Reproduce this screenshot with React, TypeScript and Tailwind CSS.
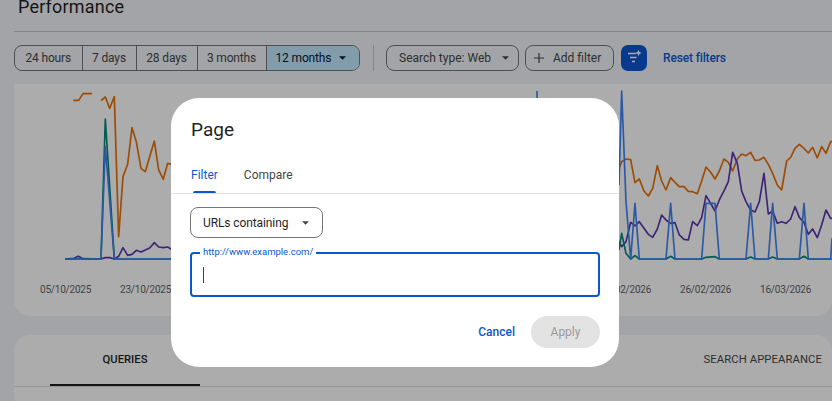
const leftOrange1 = '220,46 236,46 249,26 276,26';
const leftOrange2 = '303,47 316,36 329,70 343,35 356,455 369,275 383,238 396,128 409,170 423,250 436,260 449,215 463,168 476,255 490,283 503,235 516,238';
const leftGreen = '195,522 303,522 316,102 343,522 516,522';
const leftBlue = '195,522 303,522 316,185 343,522 516,522';
const leftPurple = '195,522 222,520 235,514 249,521 303,522 316,518 329,518 343,522 356,514 369,488 383,511 396,508 409,496 423,501 436,495 449,489 463,473 476,486 490,488 503,486 516,494';

const rightOrange = '12,250 20,230 33,222 47,224 60,293 73,282 87,318 100,333 113,310 127,242 140,288 153,315 167,278 180,292 193,305 207,305 220,319 233,320 247,326 260,288 273,246 287,262 300,282 313,258 327,222 340,232 353,258 367,222 380,207 393,212 407,202 420,226 433,225 447,217 460,238 473,265 487,300 500,315 515,228 527,217 540,190 553,178 567,190 580,204 593,187 607,219 620,185 633,205 647,170 651,170';
const rightPurple = '12,470 20,485 33,470 47,412 60,423 73,410 87,430 100,448 113,457 127,432 140,390 153,405 167,415 180,413 193,450 207,463 220,465 233,410 247,422 260,398 273,332 287,355 300,378 313,345 327,318 340,290 353,202 367,235 380,318 393,350 407,375 420,381 433,350 447,265 460,387 473,378 487,415 500,410 513,415 527,402 540,365 553,397 567,412 580,448 593,432 607,458 620,420 633,375 647,400 651,400';
const rightGreen = '12,495 20,445 33,505 47,522 60,512 73,522 153,522 167,514 180,522 260,522 273,517 300,515 313,522 393,522 407,516 420,522 460,522 473,516 487,522 553,522 567,514 580,522 651,522';
const rightBlue = '12,300 20,18 33,350 47,522 60,355 73,522 153,522 167,355 180,522 260,522 273,355 300,355 313,522 393,522 407,355 420,522 460,522 473,355 487,522 553,522 567,355 580,522 647,522 651,460';

const dates = ['05/10/2025', '23/10/2025', '10/11/2025', '28/11/2025', '16/12/2025', '03/01/2026', '21/01/2026', '08/02/2026', '26/02/2026', '16/03/2026'];
const ranges = ['24 hours', '7 days', '28 days', '3 months'];
const rangeWidths = ['w-[67.5px]', 'w-[54px]', 'w-[61px]', 'w-[69px]'];

function Caret() {
  return (
    <svg width="7" height="4" viewBox="0 0 7 4" className="shrink-0">
      <path d="M0 .25h7L3.5 3.75z" fill="currentColor" />
    </svg>
  );
}

function Line({ points, color }: { points: string; color: string }) {
  return <polyline points={points} fill="none" stroke={color} strokeWidth="5" strokeLinejoin="round" />;
}

function Chart() {
  return (
    <svg viewBox="14 84 818 195" className="block w-[818px] h-[195px]">
      <g transform="translate(0 85) scale(0.3333)">
        <Line points={leftOrange1} color="#e8710a" />
        <Line points={leftOrange2} color="#e8710a" />
        <Line points={leftPurple} color="#5e35b1" />
        <Line points={leftGreen} color="#00897b" />
        <Line points={leftBlue} color="#4285f4" />
      </g>
      <polyline points="537,91 537,100" fill="none" stroke="#4285f4" strokeWidth="1.7" />
      <g transform="translate(615 85) scale(0.3333)">
        <Line points={rightOrange} color="#e8710a" />
        <Line points={rightPurple} color="#5e35b1" />
        <Line points={rightGreen} color="#00897b" />
        <Line points={rightBlue} color="#4285f4" />
      </g>
    </svg>
  );
}

export default function App() {
  return (
    <div className="relative w-[832px] h-[401px] overflow-hidden bg-[#f0f4f8] font-['Roboto',sans-serif] text-[#444746]">
      <div className="pl-[14px]">
        <div className="h-[32px] border-b border-[#c7c7c7]">
          <h1 className="pl-1 text-[18px] leading-[13px] tracking-[0.2px] text-[#1f1f1f]">Performance</h1>
        </div>

        <div className="flex items-center h-[52px] text-[12px]">
          <div className="flex h-[26px] w-[346px] rounded-lg border border-[#747775] overflow-hidden -tracking-[0.15px]">
            {ranges.map((r, i) => (
              <div key={r} className={`flex items-center justify-center border-r border-[#747775] ${rangeWidths[i]}`}>
                {r}
              </div>
            ))}
            <div className="flex flex-1 items-center gap-[8px] bg-[#c2e7ff] pl-[9px] text-[#001d35]">
              12 months
              <Caret />
            </div>
          </div>
          <div className="ml-[13px] mr-[12px] h-[26px] w-px bg-[#c7c7c7]" />
          <div className="flex h-[26px] w-[133px] items-center gap-[11px] rounded-lg border border-[#747775] pl-3">
            Search type: Web
            <Caret />
          </div>
          <div className="ml-[6px] flex h-[26px] w-[89px] items-center gap-[9px] rounded-lg border border-[#747775] pl-2">
            <svg width="10" height="10" viewBox="0 0 10 10">
              <path d="M5 0v10M0 5h10" stroke="currentColor" strokeWidth="1.2" fill="none" />
            </svg>
            Add filter
          </div>
          <div className="ml-[7px] h-[26px] w-[26px] rounded-[7px] bg-[#0b57d0] text-white">
            <svg width="26" height="26" viewBox="0 0 26 26" className="block">
              <path d="M7 8.5h8M9 12.5h6.5M11 16.5h3" stroke="currentColor" strokeWidth="1.3" fill="none" />
              <path d="M17.5 4.8l.9 2.3 2.3.9-2.3.9-.9 2.3-.9-2.3-2.3-.9 2.3-.9z" fill="currentColor" />
            </svg>
          </div>
          <span className="ml-[16px] font-medium -tracking-[0.15px] text-[#0b57d0]">Reset filters</span>
        </div>

        <div className="h-[232px] rounded-b-2xl bg-white">
          <Chart />
          <div className="flex pl-[26px] pt-[4px] text-[10px] leading-[14px] -tracking-[0.2px] text-[#5f6368]">
            {dates.map((d) => (
              <span key={d} className="w-[80px] shrink-0">{d}</span>
            ))}
          </div>
        </div>

        <div className="mt-[19px] h-[80px] rounded-t-2xl bg-white">
          <div className="flex h-[52px] items-end border-b border-[#dadce0] text-[11.25px] font-medium">
            <div className="ml-[36px] flex h-[52px] w-[150px] items-center justify-center border-b-2 border-[#1f1f1f] pt-[3px] text-[#1f1f1f]">
              QUERIES
            </div>
            <div className="ml-auto flex h-[52px] items-center pr-[10px] pt-[1px] font-normal tracking-[0.1px]">SEARCH APPEARANCE</div>
          </div>
        </div>
      </div>

      <div className="absolute inset-0 bg-black/[0.325]" />

      <div className="absolute left-[171px] top-[98px] h-[269px] w-[448px] rounded-[28px] bg-white">
        <h2 className="pl-5 pt-[19px] text-[19px] leading-[26px] text-[#1f1f1f]">Page</h2>
        <div className="mt-[19px] flex h-[32px] border-b border-[#e3e3e3] pl-5 text-[12px] leading-[27px]">
          <div className="relative h-[31px] text-[#0b57d0]">
            <span className="block">Filter</span>
            <div className="absolute bottom-0 left-[1.5px] right-[1.5px] h-[2px] rounded-t-sm bg-[#0b57d0]" />
          </div>
          <span className="ml-[26px] text-[#444746]">Compare</span>
        </div>
        <div className="ml-[19px] mt-[13px] flex h-[31px] w-[133px] items-center gap-[14px] rounded-lg border border-[#747775] pl-3 text-[12px] -tracking-[0.1px] text-[#1f1f1f]">
          URLs containing
          <span className="text-[#444746]"><Caret /></span>
        </div>
        <div className="relative ml-[19px] mt-[14px] flex h-[45px] w-[410px] items-center rounded border-2 border-[#0b57d0] pl-[11px]">
          <span className="absolute -top-[8px] left-[8px] bg-white px-[3px] text-[9.5px] leading-[12px] text-[#0b57d0]">
            http://www.example.com/
          </span>
          <div className="h-[16px] w-px bg-[#0b4bb3]" />
        </div>
        <div className="mt-[19px] flex items-center justify-end pr-[19px] text-[12px]">
          <span className="font-medium text-[#0b57d0]">Cancel</span>
          <div className="ml-[16px] flex h-[32px] w-[69px] items-center justify-center rounded-full bg-[#e3e3e3] text-[#9a9a9a]">
            Apply
          </div>
        </div>
      </div>
    </div>
  );
}
